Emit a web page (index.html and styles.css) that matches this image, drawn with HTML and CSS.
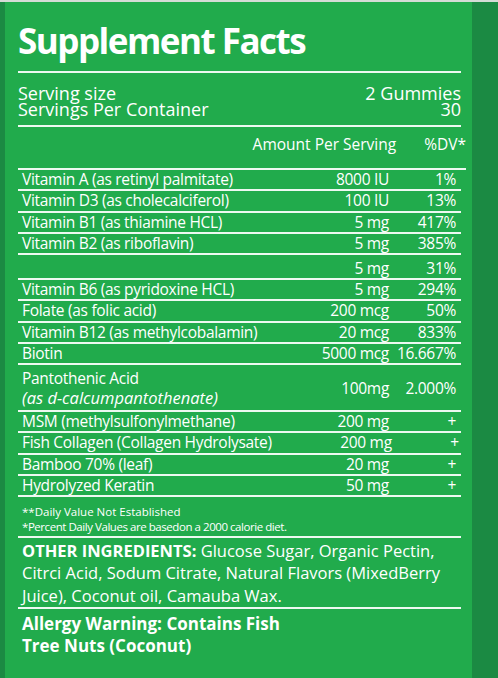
FILE: index.html
```html
<!DOCTYPE html>
<html lang="en">
<head>
    <meta charset="UTF-8">
    <meta name="viewport" content="width=device-width, initial-scale=1.0">
    <title>Supplement Facts</title>
    <link rel="stylesheet" href="styles.css">
</head>
<body>
    <div class="label">
        <h1>Supplement Facts</h1>

        <div class="serving">
            <div class="serving-row"><span>Serving size</span><span>2 Gummies</span></div>
            <div class="serving-row"><span>Servings Per Container</span><span>30</span></div>
        </div>

        <div class="facts-head">
            <span>Amount Per Serving</span>
            <span>%DV*</span>
        </div>

        <div class="facts">
            <div class="row"><span>Vitamin A (as retinyl palmitate)</span><span class="amount">8000 IU</span><span class="dv">1%</span></div>
            <div class="row"><span>Vitamin D3 (as cholecalciferol)</span><span class="amount">100 IU</span><span class="dv">13%</span></div>
            <div class="row"><span>Vitamin B1 (as thiamine HCL)</span><span class="amount">5 mg</span><span class="dv">417%</span></div>
            <div class="row"><span>Vitamin B2 (as riboflavin)</span><span class="amount">5 mg</span><span class="dv">385%</span></div>
            <div class="row blank"><span></span><span class="amount">5 mg</span><span class="dv">31%</span></div>
            <div class="row"><span>Vitamin B6 (as pyridoxine HCL)</span><span class="amount">5 mg</span><span class="dv">294%</span></div>
            <div class="row"><span>Folate (as folic acid)</span><span class="amount">200 mcg</span><span class="dv">50%</span></div>
            <div class="row"><span>Vitamin B12 (as methylcobalamin)</span><span class="amount">20 mcg</span><span class="dv">833%</span></div>
            <div class="row"><span>Biotin</span><span class="amount">5000 mcg</span><span class="dv">16.667%</span></div>
            <div class="row tall">
                <span>Pantothenic Acid<br><em>(as d-calcumpantothenate)</em></span>
                <span class="amount">100mg</span>
                <span class="dv">2.000%</span>
            </div>
            <div class="row"><span>MSM (methylsulfonylmethane)</span><span class="amount">200 mg</span><span class="dv">+</span></div>
            <div class="row"><span>Fish Collagen (Collagen Hydrolysate)</span><span class="amount">200 mg</span><span class="dv">+</span></div>
            <div class="row"><span>Bamboo 70% (leaf)</span><span class="amount">20 mg</span><span class="dv">+</span></div>
            <div class="row"><span>Hydrolyzed Keratin</span><span class="amount">50 mg</span><span class="dv">+</span></div>
        </div>

        <div class="notes">
            <p>**Daily Value Not Established</p>
            <p class="tight">*Percent Daily Values are basedon a 2000 calorie diet.</p>
        </div>

        <p class="ingredients"><strong>OTHER INGREDIENTS:</strong> Glucose Sugar, Organic Pectin,<br>Citrci Acid, Sodum Citrate, Natural Flavors (MixedBerry<br>Juice), Coconut oil, Camauba Wax.</p>

        <p class="allergy">Allergy Warning: Contains Fish<br>Tree Nuts (Coconut)</p>
    </div>
</body>
</html>
```

FILE: styles.css
```css
body {
    margin: 0;
    height: 678px;
    overflow: hidden;
    background-color: #1b8a43;
    border-top: 2px solid #d4dcd6;
    box-sizing: border-box;
    font-family: "Open Sans", "Liberation Sans", sans-serif;
    color: #fff;
}
.label {
    margin-left: 5px;
    width: 467px;
    height: 100%;
    box-sizing: border-box;
    padding: 0 11px 0 13px;
    background-color: #21ab4c;
}
.label > * {
    box-sizing: border-box;
    border-bottom: 2px solid rgba(255, 255, 255, 0.92);
}
h1 {
    margin: 0;
    height: 71px;
    padding: 19px 0 0 0;
    font-size: 35px;
    line-height: 40px;
    font-weight: 700;
    letter-spacing: -1.5px;
}
.serving {
    height: 54px;
    padding-top: 13px;
    font-size: 18px;
    line-height: 15.5px;
}
.serving-row {
    display: flex;
    justify-content: space-between;
}
.facts-head {
    height: 43px;
    padding-top: 8px;
    display: flex;
    justify-content: flex-end;
    gap: 28px;
    margin-right: -5px;
    font-size: 15.5px;
    line-height: 18px;
}
.facts {
    border-bottom: 0 !important;
}
.row {
    display: grid;
    grid-template-columns: 1fr 120px 72px;
    box-sizing: border-box;
    height: 21.25px;
    padding-left: 4px;
    font-size: 15.5px;
    line-height: 18px;
    letter-spacing: -0.3px;
    white-space: nowrap;
    border-bottom: 2px solid rgba(255, 255, 255, 0.92);
}
.row.blank {
    height: 25px;
    padding-top: 4px;
}
.row.tall {
    height: 47px;
    padding-top: 3px;
    line-height: 20px;
}
.row.tall .amount,
.row.tall .dv {
    padding-top: 10px;
}
.row.tall em {
    font-size: 16.5px;
    letter-spacing: 0;
}
.amount,
.dv {
    text-align: right;
}
.dv {
    padding-right: 5px;
}
.notes {
    height: 41px;
    padding: 7px 0 0 4px;
    font-size: 11.5px;
    line-height: 15px;
}
.notes p {
    margin: 0;
}
.notes .tight {
    letter-spacing: -0.45px;
}
.ingredients {
    margin: 0;
    height: 71px;
    padding: 1.5px 0 0 4px;
    font-size: 16.5px;
    line-height: 22.5px;
}
.allergy {
    margin: 0;
    padding: 3.5px 0 0 4px;
    font-size: 17px;
    line-height: 22px;
    font-weight: 700;
    border-bottom: 0 !important;
}
```
